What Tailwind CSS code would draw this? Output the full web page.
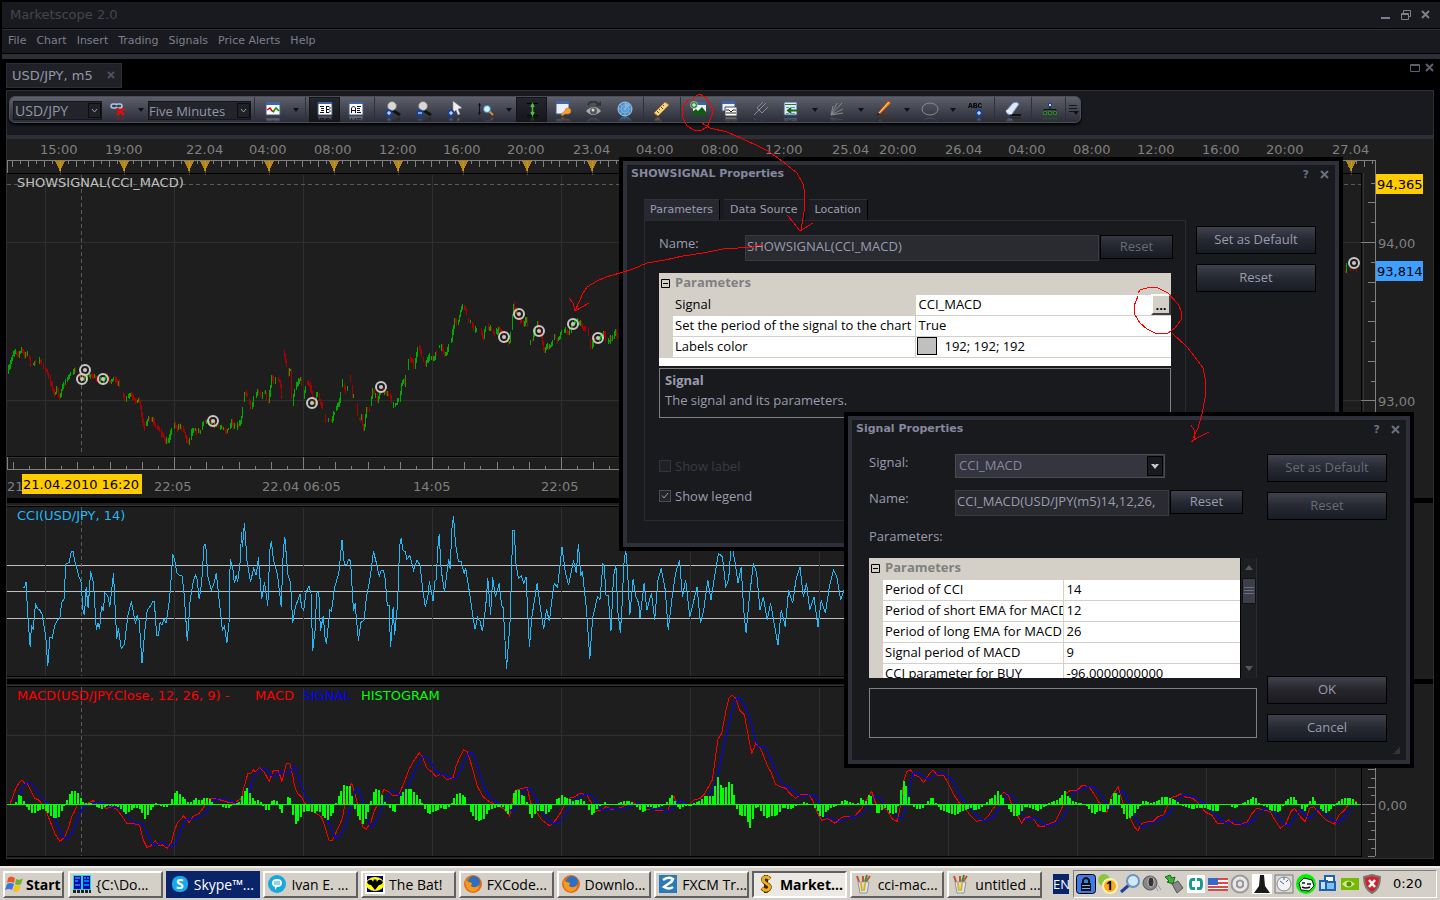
<!DOCTYPE html>
<html lang="en">
<head>
    <meta charset="UTF-8">
    <meta name="viewport" content="width=device-width, initial-scale=1.0">
    <title>Marketscope 2.0</title>
    <script src="https://cdn.jsdelivr.net/npm/@tailwindcss/browser@4"></script>
</head>
<body class="relative flex min-h-screen flex-col overflow-hidden bg-black font-['DejaVu_Sans',sans-serif] text-[13px] text-[#9496a6]">

    <!-- Title bar -->
    <header class="mt-[2px] ml-[2px] flex h-[26px] items-center justify-between bg-[#191a1f] pr-[8px] pl-[8px]">
        <h1 class="text-[13px] text-[#44454f]">Marketscope 2.0</h1>
        <div class="flex gap-[8px] text-[#7d7f8c]">
            <button aria-label="Minimize"><svg width="12" height="12" fill="none" stroke="currentColor" stroke-width="2"><path d="M1 9h9"/></svg></button>
            <button aria-label="Restore"><svg width="12" height="12" fill="none" stroke="currentColor"><path d="M1.500 4.500h7v6h-7zM1 5.500h8M3.500 4V1.500h7v6H9"/></svg></button>
            <button aria-label="Close"><svg width="12" height="12" fill="none" stroke="currentColor" stroke-width="2"><path d="M2 2l7 7M9 2l-7 7"/></svg></button>
        </div>
    </header>

    <nav class="mt-[1px] ml-[2px] flex h-[24px] items-center gap-[10px] border-t border-[#2d2e36] bg-[#191a1f] pl-[6px] text-[11px] text-[#7d7f90]">
        <a href="#">File</a>
        <a href="#">Chart</a>
        <a href="#">Insert</a>
        <a href="#">Trading</a>
        <a href="#">Signals</a>
        <a href="#">Price Alerts</a>
        <a href="#">Help</a>
    </nav>
    <div class="mt-[1px] ml-[2px] h-[5px] bg-[#2d2e36]"></div>

    <!-- Document tabs -->
    <div class="flex h-[31px] items-start justify-between pt-[4px] pr-[5px] pl-[6px]">
        <div class="flex h-[25px] w-[116px] items-center justify-between border border-[#2d2e36] bg-[#202127] pr-[5px] pl-[5px]">
            <span>USD/JPY, m5</span>
            <button aria-label="Close tab" class="text-[#4d5160]"><svg width="9" height="9" fill="none" stroke="currentColor" stroke-width="2"><path d="M1 1l6 6M7 1l-6 6"/></svg></button>
        </div>
        <div class="flex gap-[5px] text-[#5c5f70]">
            <button aria-label="Restore chart"><svg width="10" height="10" fill="none" stroke="currentColor"><path d="M.5 1.500h9v7h-9zM0 2.500h10"/></svg></button>
            <button aria-label="Close chart"><svg width="10" height="10" fill="none" stroke="currentColor" stroke-width="2"><path d="M1 1l7 7M8 1l-7 7"/></svg></button>
        </div>
    </div>

    <main class="mx-[6px] border-x border-t border-[#2d2e36] bg-black">
        <!-- Toolbar -->
        <div class="h-[44px] bg-[#191a1f] pt-[5px] pl-[2px]">
            <div class="flex h-[27px] w-[1072px] items-stretch overflow-hidden rounded-[6px] border border-[#4a4c57] bg-linear-to-b from-[#5d5f6b] via-[#434651] to-[#2b2e38] pl-[3px] shadow-[0_2px_3px_#000] [&_button]:flex [&_button]:w-[31px] [&_button]:shrink-0 [&_button]:justify-center [&_button]:pt-[4px] [&_button>svg]:[-webkit-box-reflect:below_-1px_linear-gradient(transparent_60%,#0007)] [&_i]:w-[15px] [&_i]:shrink-0 [&_i]:pt-[11px] [&_i]:pl-[5px]" id="toolbar">
                <div class="relative mt-[4px] h-[19px] w-[89px] shrink-0">
                    <select aria-label="Instrument" class="h-[19px] w-full appearance-none border border-[#15161a] bg-[#23242b] pl-[1px] font-['Open_Sans',sans-serif] text-[14px] leading-[18px]"><option>USD/JPY</option></select>
                    <svg class="pointer-events-none absolute top-[2px] right-[1px]" width="13" height="15" fill="#202127" stroke="#0c0c10"><path d="M.5.5h12v14H.5z"/><path d="M4 6l2.500 3L9 6" stroke="#9a9cae" fill="none"/></svg>
                </div>
                <button aria-label="Unlink"><svg width="18" height="16" fill="none"><g stroke="#a9c8ee" stroke-width="1.500"><rect x="2" y="3" width="6" height="4" rx="2"/><rect x="7" y="3" width="6" height="4" rx="2"/></g><path d="M5 5h5" stroke="#111" stroke-width="1"/><path d="M8 7l7 7M15 7l-7 7" stroke="#f00" stroke-width="2"/></svg></button>
                <i><svg width="6" height="4"><path d="M0 0h6L3 4z" fill="#111"/></svg></i>
                <div class="relative mt-[4px] h-[19px] w-[103px] shrink-0">
                    <select aria-label="Period" class="h-[19px] w-full appearance-none border border-[#15161a] bg-[#23242b] pl-[0px] font-['Open_Sans',sans-serif] text-[13px] leading-[18px]"><option>Five Minutes</option></select>
                    <svg class="pointer-events-none absolute top-[2px] right-[1px]" width="13" height="15" fill="#202127" stroke="#0c0c10"><path d="M.5.5h12v14H.5z"/><path d="M4 6l2.500 3L9 6" stroke="#9a9cae" fill="none"/></svg>
                </div>
                <div class="w-[6px] shrink-0"><div class="ml-[3px] h-full w-[1px] bg-[#2f3039]"></div></div>
                <button aria-label="Chart type"><svg width="16" height="16"><path d="M1 2h14v12H1z" fill="#fff" stroke="#3c5686"/><path d="M1 1h14v3H1z" fill="#3f64a8"/><path d="M2 9l3-2 2 3 2 1" stroke="#e00" fill="none" stroke-width="1.500"/><path d="M8 11l3-4 3 3" stroke="#090" fill="none" stroke-width="1.500"/></svg></button>
                <i><svg width="6" height="4"><path d="M0 0h6L3 4z" fill="#111"/></svg></i>
                <div class="w-[6px] shrink-0"><div class="ml-[2px] h-full w-[1px] bg-[#2f3039]"></div></div>
                <button aria-label="Bid" class="border border-[#14151a] bg-linear-to-b from-[#25262e] to-[#16171c]"><svg width="16" height="14"><path d="M1 1h14v12H1z" fill="#fff" stroke="#3c5686"/><path d="M1 0h14v2H1z" fill="#3f64a8"/><path d="M3 4.500h4M4 6.500h3M4 8.500h3M3 10.500h4M9.500 4v7M9 4.500h3l1 1v1l-1 1H9M12 7.500l1 1v1l-1 1H9" stroke="#111" fill="none"/></svg></button>
                <button aria-label="Ask"><svg width="16" height="15"><path d="M1 2h14v12H1z" fill="#fff" stroke="#3c5686"/><path d="M1 1h14v2H1z" fill="#3f64a8"/><path d="M3.500 12V7l2-2 2 2v5M3 9.500h4M9 5.500h4M9 7.500h3M9 9.500h3M9 11.500h4" stroke="#111" fill="none"/></svg></button>
                <div class="w-[6px] shrink-0"><div class="ml-[3px] h-full w-[1px] bg-[#2f3039]"></div></div>
                <button aria-label="Zoom in"><svg width="18" height="16"><path d="M8 9l8 5" stroke="#111" stroke-width="3"/><circle cx="8" cy="5" r="4.500" fill="#d8d8d8" stroke="#777"/><circle cx="5" cy="12" r="3.500" fill="#16439a"/><path d="M3 12h4M5 10v4" stroke="#fff"/></svg></button>
                <button aria-label="Zoom out"><svg width="18" height="16"><path d="M8 9l8 5" stroke="#111" stroke-width="3"/><circle cx="8" cy="5" r="4.500" fill="#d8d8d8" stroke="#777"/><circle cx="5" cy="12" r="3.500" fill="#16439a"/><path d="M3 12h4" stroke="#fff"/></svg></button>
                <button aria-label="Cursor"><svg width="18" height="16"><path d="M7 0v12l3-3 2 5 2-1-2-5 4-1z" fill="#eee" stroke="#888" stroke-width=".5"/><circle cx="5" cy="12" r="3.500" fill="#16439a"/><path d="M3 12h4M5 10v4" stroke="#fff"/></svg></button>
                <button aria-label="Scale"><svg width="18" height="16"><path d="M2.500 2v12M1 4h3M1 12h3" stroke="#111" fill="none"/><path d="M12 10l4 4" stroke="#d98b35" stroke-width="2"/><circle cx="10" cy="8" r="3.500" fill="#d4f4fb" stroke="#2e86b8"/></svg></button>
                <i><svg width="6" height="4"><path d="M0 0h6L3 4z" fill="#111"/></svg></i>
                <button aria-label="Auto scale" class="border border-[#14151a] bg-linear-to-b from-[#25262e] to-[#16171c]"><svg width="16" height="15"><path d="M3 1.500h11M3 13.500h11" stroke="#000"/><path d="M8.500 3v9M7 5l1.500-3L10 5M7 10l1.500 3 1.500-3" stroke="#4fc03f" stroke-width="1.500" fill="none"/></svg></button>
                <button aria-label="Chart options"><svg width="18" height="16"><path d="M2 1h13v12H2z" fill="#e9f0fb" stroke="#3c5686"/><path d="M2 0h13v3H2z" fill="#3f64a8"/><path d="M8 15l-1-2 4-3a3 3 0 1 1 3 3l-3 0z" fill="#f5a133" stroke="#b1661a" stroke-width=".5"/></svg></button>
                <button aria-label="Show"><svg width="18" height="16"><path d="M3 4c3-5 8-4 10-1" stroke="#333" stroke-width="2" fill="none"/><path d="M10 5h6V0z" fill="#333"/><path d="M1 10q8-8 15 0q-8 8-15 0" fill="#a9aab2"/><circle cx="8.500" cy="10" r="3.500" fill="#555"/><circle cx="8" cy="9" r="1.500" fill="#ddd"/></svg></button>
                <button aria-label="Radar"><svg width="18" height="16"><circle cx="9" cy="8" r="7" fill="#4c8fc8" stroke="#9fc7e8"/><path d="M2 8h14M9 1v14M4 3l10 10M14 3L4 13" stroke="#9fc7e8" stroke-width=".5"/><circle cx="9" cy="8" r="4" fill="none" stroke="#9fc7e8" stroke-width=".5"/><path d="M9 8V2a6 6 0 0 1 5 3z" fill="#7fb6e0"/></svg></button>
                <div class="w-[6px] shrink-0"><div class="ml-[3px] h-full w-[1px] bg-[#2f3039]"></div></div>
                <button aria-label="Ruler"><svg width="18" height="16"><path d="M1 12L12 1l4 3L5 15z" fill="#f3d58a" stroke="#a97c2a"/><path d="M4 10l2 2M6 8l1 1M8 6l2 2M10 4l1 1" stroke="#7a5210"/></svg></button>
                <div class="w-[6px] shrink-0"><div class="ml-[3px] h-full w-[1px] bg-[#2f3039]"></div></div>
                <button aria-label="Add indicator"><svg width="18" height="16"><path d="M3 3h13v11H3z" fill="#e8f0fb"/><path d="M3 1h13v3H3z" fill="#3f64a8"/><path d="M2 14V11l4-3 2 2 4-4 4 5v3z" fill="#115c11"/><circle cx="4" cy="4" r="3.500" fill="#3d7a34" stroke="#dfe" stroke-width=".5"/><path d="M2 4h4M4 2v4" stroke="#fff"/></svg></button>
                <button aria-label="Indicator list"><svg width="18" height="16"><path d="M1 1h13v9H1z" fill="#eef3fb" stroke="#3c5686"/><path d="M1 0h13v3H1z" fill="#3f64a8"/><path d="M4 6h12v9H4z" fill="#fff" stroke="#444"/><path d="M5 9h3l2 2 2-2h3M5 12h10" stroke="#222" fill="none"/></svg></button>
                <button aria-label="Pitchfork"><svg width="18" height="16" fill="none" stroke="#8a8b90"><path d="M2 14L14 2M5 7l6-6M10 12l6-6M5 7l5 5"/></svg></button>
                <button aria-label="Levels"><svg width="18" height="16"><path d="M1 1h13v13H1z" fill="#dfe9f8" stroke="#3c5686"/><path d="M2 3.500h11" stroke="#2b7a1b"/><path d="M3 6.500h3M8 6.500h4M3 12.500h3M8 12.500h4" stroke="#6c8bc0"/><path d="M5 9.500h11M8 7l-3 2.500L8 12" stroke="#176a10" stroke-width="2" fill="none"/></svg></button>
                <i><svg width="6" height="4"><path d="M0 0h6L3 4z" fill="#111"/></svg></i>
                <button aria-label="Fan"><svg width="18" height="16" fill="none" stroke="#8a8b90"><path d="M2 14L4 5M2 14L13 2M2 14L8 2M2 14l12-6M2 14l12-2"/></svg></button>
                <i><svg width="6" height="4"><path d="M0 0h6L3 4z" fill="#111"/></svg></i>
                <button aria-label="Line"><svg width="18" height="16"><path d="M4 14.500h12" stroke="#5a2c12"/><path d="M3 12L13 0l3 2L5 13z" fill="#f58220" stroke="#a8440b" stroke-width=".7"/><path d="M4 12L14 1" stroke="#ffd08a"/><path d="M1 15l2-3 2 1z" fill="#222"/></svg></button>
                <i><svg width="6" height="4"><path d="M0 0h6L3 4z" fill="#111"/></svg></i>
                <button aria-label="Ellipse"><svg width="18" height="16"><ellipse cx="9" cy="8" rx="8" ry="6" fill="none" stroke="#8a8b90"/></svg></button>
                <i><svg width="6" height="4"><path d="M0 0h6L3 4z" fill="#111"/></svg></i>
                <button aria-label="Text label"><svg width="18" height="16"><text x="1" y="7" font-size="8" font-family="Liberation Mono" font-weight="bold" fill="#000">ABC</text><circle cx="12" cy="12" r="3.500" fill="#16439a"/><path d="M10 12h4M12 10v4" stroke="#fff"/></svg></button>
                <div class="w-[6px] shrink-0"><div class="ml-[3px] h-full w-[1px] bg-[#2f3039]"></div></div>
                <button aria-label="Eraser"><svg width="18" height="16"><path d="M6 14h11" stroke="#111" stroke-width="2"/><path d="M2 10l7-8q4-2 6 1l-7 10q-5 2-6-3z" fill="#dbe7fb" stroke="#7f93b8"/><path d="M2 10q2-1 4 1t2 2" fill="none" stroke="#fff"/></svg></button>
                <div class="w-[6px] shrink-0"><div class="ml-[3px] h-full w-[1px] bg-[#2f3039]"></div></div>
                <button aria-label="Structure"><svg width="18" height="16"><path d="M9 5v4M3 11V8.500h12V11" stroke="#111" fill="none"/><path d="M7.500 2.500h3v3h-3z" fill="#bcd6ff" stroke="#1d3d7a"/><path d="M2.500 10.500h3v3h-3zM7.500 10.500h3v3h-3zM12.500 10.500h3v3h-3z" fill="#123d12" stroke="#2f8a20"/></svg></button>
                <svg class="border-l border-[#2f3039]" width="15" height="25"><path d="M3 8.500h8M3 11.500h8M3 14.500h5" stroke="#15161a"/><path d="M7 14h6l-3 4z" fill="#111"/></svg>
            </div>
        </div>
        <div class="h-[4px] bg-[#2d2e36]"></div>

        <!-- Price panel -->
        <svg class="block h-[359px] w-full bg-[#1e1e1e]" shape-rendering="crispEdges">
            <defs>
                <g id="mark" shape-rendering="auto"><circle r="5" fill="none" stroke="#c8c8c8" stroke-width="2"/><circle r="2" fill="#c8c8c8"/></g>
            </defs>
            <g transform="translate(-7 -139)">
                <g class="grid-x" data-y1="175" data-y2="456"></g>
                <path d="M7 242.500h1354M7 400.500h1354" stroke="#2f2f2f"/>
                <path d="M81.500 175V455M7 184.500h1354" stroke="#5a5a5a" stroke-dasharray="4 3"/>
                <g id="topRuler"></g>
                <path d="M7 173.500h1354.500V456.500H7" stroke="#000" fill="none"/>
                <path d="M7 457.500h1356V173" stroke="#333" fill="none"/>
                <g id="priceBars"></g>
                <g id="marks"></g>
                <g id="bottomRuler"></g>
                <g id="priceAxis"></g>
                <text x="17" y="187" fill="#c0c0c0">SHOWSIGNAL(CCI_MACD)</text>
                <g fill="#808080" id="timeLabels"></g>
                <g fill="#808080">
                    <text x="7" y="491">21</text>
                    <text x="154" y="491">22:05</text>
                    <text x="262" y="491">22.04 06:05</text>
                    <text x="413" y="491">14:05</text>
                    <text x="541" y="491">22:05</text>
                    <text x="1378" y="248">94,00</text>
                    <text x="1378" y="406">93,00</text>
                </g>
                <path d="M22 474h120v20H22z" fill="#fc0"/>
                <text x="23" y="489" fill="#000">21.04.2010 16:20</text>
                <path d="M1376 174h47v20h-47z" fill="#fc0"/>
                <text x="1377" y="189" fill="#000">94,365</text>
                <path d="M1376 261h47v20h-47z" fill="#3f9fff"/>
                <text x="1377" y="276" fill="#000">93,814</text>
            </g>
        </svg>

        <!-- CCI panel -->
        <svg class="mt-[5px] block h-[176px] w-full bg-[#1e1e1e]" shape-rendering="crispEdges">
            <g transform="translate(-7 -503)">
                <path d="M7 505.500h1354" stroke="#333"/>
                <path d="M7 506.500h1354.500V676.500H7" stroke="#000" fill="none"/>
                <path d="M7 677.500h1356" stroke="#333"/>
                <path d="M7 565.500h1354M7 591.500h1354M7 618.500h1354" stroke="#c0c0c0"/>
                <g class="grid-x" data-y1="508" data-y2="676"></g>
                <path d="M81.500 507V676" stroke="#5a5a5a" stroke-dasharray="4 3"/>
                <polyline id="cci" fill="none" stroke="#22b8f5"/>
                <text x="17" y="520" fill="#22b8f5">CCI(USD/JPY, 14)</text>
            </g>
        </svg>

        <!-- MACD panel -->
        <svg class="mt-[5px] block h-[175px] w-full border-b border-[#333] bg-[#1e1e1e]" shape-rendering="crispEdges">
            <g transform="translate(-7 -684)">
                <path d="M7 685.500h1354" stroke="#333"/>
                <path d="M7 686.500h1354.500V856.500H7" stroke="#000" fill="none"/>
                <path d="M7 735.500h1354" stroke="#2f2f2f"/>
                <g class="grid-x" data-y1="688" data-y2="856"></g>
                <path d="M81.500 687V856" stroke="#5a5a5a" stroke-dasharray="4 3"/>
                <g id="macdAxis"></g>
                <polyline id="macd" fill="none" stroke="#f00"/>
                <polyline id="macdSignal" fill="none" stroke="#00f"/>
                <path id="histogram" fill="none" stroke="#0f0" stroke-width="2"/>
                <path d="M7 804.500h1354" stroke="#0f0"/>
                <text x="17" y="700" fill="#f00">MACD(USD/JPY.Close, 12, 26, 9) -</text>
                <text x="255" y="700" fill="#f00">MACD</text>
                <text x="303" y="700" fill="#00f">SIGNAL</text>
                <text x="361" y="700" fill="#0f0">HISTOGRAM</text>
                <text x="1378" y="810" fill="#808080">0,00</text>
            </g>
        </svg>
    </main>

    <!-- SHOWSIGNAL Properties -->
    <section class="absolute top-[157px] left-[619px] h-[394px] w-[724px] border-4 border-black font-['Open_Sans',sans-serif] text-[13px] text-[#9a9cae]">
        <div class="h-full border-4 border-[#2d3038] bg-[#191a1e]">
            <div class="flex h-[34px] items-start justify-between pr-[6px] pl-[4px] font-['DejaVu_Sans',sans-serif] text-[11px] leading-[17px] font-bold text-[#85889e]">
                <h2>SHOWSIGNAL Properties</h2>
                <div class="flex items-center gap-[11px] pt-[1px] text-[#6c6f80]">
                    <button aria-label="Help">?</button>
                    <button aria-label="Close"><svg width="9" height="9" fill="none" stroke="currentColor" stroke-width="2"><path d="M1 1l7 7M8 1l-7 7"/></svg></button>
                </div>
            </div>
            <div class="flex items-start gap-[10px] pl-[17px]">
                <div class="w-[542px]">
                    <div class="flex gap-[4px] font-['DejaVu_Sans',sans-serif] text-[11px] [&>button]:h-[21px] [&>button]:border-t [&>button]:border-r [&>button]:border-t-[#2f3038] [&>button]:border-r-black [&>button]:px-[6px]">
                        <button class="bg-[#282930]">Parameters</button>
                        <button class="bg-[#1d1e23]">Data Source</button>
                        <button class="bg-[#1d1e23]">Location</button>
                    </div>
                    <div class="h-[301px] border border-[#2a2b31] pt-[14px] pr-[12px] pl-[14px]">
                        <div class="flex items-start">
                            <label for="showName" class="w-[86px] leading-[16px]">Name:</label>
                            <input id="showName" value="SHOWSIGNAL(CCI_MACD)" class="h-[26px] w-[354px] border border-[#3a3b42] bg-[#2a2a31] px-[1px] pb-[5px] text-[13px]">
                            <button class="ml-[1px] h-[24px] w-[73px] border border-black bg-linear-to-b from-[#34373f] via-[#23262e] to-[#181b23] text-[#676a78]">Reset</button>
                        </div>
                        <div class="relative mt-[12px] h-[93px] w-[512px] bg-white text-black">
                            <table class="w-full table-fixed border-collapse text-left [&_td]:h-[21px] [&_td]:overflow-hidden [&_td]:border-b [&_td]:border-[#d4d0c8] [&_td]:p-0 [&_td]:pb-[2px] [&_td]:leading-[18px] [&_td]:whitespace-nowrap">
                                <colgroup><col class="w-[14px]"><col class="w-[242px]"><col></colgroup>
                                <tr class="bg-[#d4d0c8]"><td><svg class="mt-[2px] ml-[2px]" width="9" height="9" fill="none" stroke="#000"><path d="M.5.5h8v8h-8zM2 4.500h5"/></svg></td><td colspan="2" class="pl-[2px]! font-bold text-[#808080]">Parameters</td></tr>
                                <tr><td class="bg-[#d4d0c8]"></td><td class="bg-[#d4d0c8] pl-[2px]!">Signal</td><td class="border-l pl-[3px]!">CCI_MACD</td></tr>
                                <tr><td class="bg-[#d4d0c8]"></td><td class="pl-[2px]!">Set the period of the signal to the chart</td><td class="border-l pl-[3px]!">True</td></tr>
                                <tr><td class="bg-[#d4d0c8]"></td><td class="pl-[2px]!">Labels color</td><td class="border-l pl-[1px]!"><div class="flex items-center gap-[8px]"><span class="h-[18px] w-[20px] border border-black bg-[#c0c0c0]"></span>192; 192; 192</div></td></tr>
                            </table>
                            <button aria-label="Edit signal" class="absolute top-[21px] right-0 h-[21px] w-[20px] border-2 border-t-white border-r-[#404040] border-b-[#404040] border-l-white bg-[#d4d0c8] leading-[12px] font-bold">...</button>
                        </div>
                        <div class="mt-[2px] h-[50px] w-[512px] border border-[#808080] px-[5px] pt-[1px] leading-[20px]">
                            <p class="font-bold">Signal</p>
                            <p>The signal and its parameters.</p>
                        </div>
                        <label class="mt-[38px] flex items-center gap-[4px] leading-[20px] text-[#3a3b44]">
                            <input type="checkbox" disabled class="size-[12px] appearance-none border border-[#33343b] bg-[#202127]">Show label
                        </label>
                        <label class="relative mt-[10px] flex items-center gap-[4px] leading-[20px]">
                            <input type="checkbox" checked class="size-[12px] appearance-none border border-[#4a4b55] bg-[#24252c]">Show legend
                            <svg class="pointer-events-none absolute top-[4px] left-0" width="12" height="12" fill="none" stroke="#9a9cae"><path d="M3 5.500l2 2.500 4-5"/></svg>
                        </label>
                    </div>
                </div>
                <div class="flex flex-col gap-[10px] pt-[27px] [&>button]:h-[28px] [&>button]:w-[120px] [&>button]:border [&>button]:border-black [&>button]:bg-linear-to-b [&>button]:from-[#3f424c] [&>button]:via-[#262932] [&>button]:to-[#181c25]">
                    <button>Set as Default</button>
                    <button>Reset</button>
                </div>
            </div>
        </div>
    </section>

    <!-- Signal Properties -->
    <section class="absolute top-[412px] left-[844px] h-[356px] w-[570px] border-4 border-black font-['Open_Sans',sans-serif] text-[13px] text-[#9a9cae]">
        <div class="relative h-full border-4 border-[#2d3038] bg-[#191a1e]">
            <div class="flex h-[34px] items-start justify-between pr-[6px] pl-[4px] font-['DejaVu_Sans',sans-serif] text-[11px] leading-[17px] font-bold text-[#85889e]">
                <h2>Signal Properties</h2>
                <div class="flex items-center gap-[11px] pt-[1px] text-[#6c6f80]">
                    <button aria-label="Help">?</button>
                    <button aria-label="Close"><svg width="9" height="9" fill="none" stroke="currentColor" stroke-width="2"><path d="M1 1l7 7M8 1l-7 7"/></svg></button>
                </div>
            </div>
            <div class="flex items-start gap-[10px] pl-[17px]">
                <div class="w-[388px]">
                    <div class="flex h-[36px] items-start">
                        <label for="signalKind" class="w-[86px] leading-[16px]">Signal:</label>
                        <div class="relative w-[210px]">
                            <select id="signalKind" class="h-[24px] w-full appearance-none border border-[#4a4b52] bg-[#35353f] pl-[3px] text-[13px] text-[#85889e]"><option>CCI_MACD</option></select>
                            <svg class="pointer-events-none absolute top-[2px] right-[2px]" width="16" height="20"><path d="M.5.5h15v19H.5z" fill="#191a1e" stroke="#000"/><path d="M4 8h3l1 1 1-1h3l-4 5z" fill="#c8cad6"/></svg>
                        </div>
                    </div>
                    <div class="flex h-[36px] items-start">
                        <label for="signalName" class="w-[86px] leading-[16px]">Name:</label>
                        <input id="signalName" value="CCI_MACD(USD/JPY(m5)14,12,26," class="h-[26px] w-[214px] border border-[#3a3b42] bg-[#2a2a31] px-[1px] pb-[5px] text-[13px]">
                        <button class="ml-[1px] h-[24px] w-[73px] border border-black bg-linear-to-b from-[#3f424c] via-[#262932] to-[#181c25]">Reset</button>
                    </div>
                    <p class="h-[32px] leading-[20px]">Parameters:</p>
                    <div class="flex h-[120px] overflow-hidden">
                        <div class="w-[371px] overflow-hidden bg-white text-black">
                            <table class="w-full table-fixed border-collapse text-left [&_td]:h-[21px] [&_td]:overflow-hidden [&_td]:border-b [&_td]:border-[#d4d0c8] [&_td]:p-0 [&_td]:pb-[2px] [&_td]:leading-[18px] [&_td]:whitespace-nowrap">
                                <colgroup><col class="w-[14px]"><col class="w-[180px]"><col></colgroup>
                                <tr class="bg-[#d4d0c8]"><td><svg class="mt-[2px] ml-[2px]" width="9" height="9" fill="none" stroke="#000"><path d="M.5.5h8v8h-8zM2 4.500h5"/></svg></td><td colspan="2" class="pl-[2px]! font-bold text-[#808080]">Parameters</td></tr>
                                <tr><td class="bg-[#d4d0c8]"></td><td class="pl-[2px]!">Period of CCI</td><td class="border-l pl-[3px]!">14</td></tr>
                                <tr><td class="bg-[#d4d0c8]"></td><td class="pl-[2px]!">Period of short EMA for MACD</td><td class="border-l pl-[3px]!">12</td></tr>
                                <tr><td class="bg-[#d4d0c8]"></td><td class="pl-[2px]!">Period of long EMA for MACD</td><td class="border-l pl-[3px]!">26</td></tr>
                                <tr><td class="bg-[#d4d0c8]"></td><td class="pl-[2px]!">Signal period of MACD</td><td class="border-l pl-[3px]!">9</td></tr>
                                <tr><td class="bg-[#d4d0c8]"></td><td class="pl-[2px]!">CCI parameter for BUY</td><td class="border-l pl-[3px]!">-96,0000000000</td></tr>
                            </table>
                        </div>
                        <div class="flex w-[17px] flex-col items-center justify-between border-x border-x-black border-r-[#2a2b31] bg-[#1d1e22] py-[7px]">
                            <svg width="8" height="5"><path d="M0 5h8L4 0z" fill="#55575f"/></svg>
                            <svg class="mt-[8px] mb-auto" width="14" height="26"><path d="M.5.5h13v25H.5z" fill="#3c3e49" stroke="#111"/><path d="M2 9.500h10M2 12.500h10M2 15.500h10" stroke="#6c6f80"/></svg>
                            <svg width="8" height="5"><path d="M0 0h8L4 5z" fill="#55575f"/></svg>
                        </div>
                    </div>
                    <div class="mt-[10px] h-[50px] border border-[#808080]"></div>
                </div>
                <div class="flex h-[288px] flex-col gap-[10px] [&>button]:h-[28px] [&>button]:w-[120px] [&>button]:border [&>button]:border-black [&>button]:bg-linear-to-b [&>button]:from-[#3f424c] [&>button]:via-[#262932] [&>button]:to-[#181c25]">
                    <button disabled class="text-[#676a78]">Set as Default</button>
                    <button disabled class="text-[#676a78]">Reset</button>
                    <button class="mt-auto via-[#26252c]! to-[#1c1b20]!">OK</button>
                    <button>Cancel</button>
                </div>
            </div>
            <svg class="absolute right-[5px] bottom-[5px]" width="8" height="8"><path d="M6 0h1v7H0V6h2V4h2V2h2z" fill="#34353b"/></svg>
        </div>
    </section>

    <!-- Hand-drawn pointers -->
    <svg class="pointer-events-none absolute top-0 left-0 h-[500px] w-full" fill="none" stroke="#f00" shape-rendering="crispEdges">
        <path d="M692 100L696 96L700 94L706 98L711 105L713 112L710 120L707 127L700 131L694 130L687 126L683 118L682 110L685 103L690 99"/>
        <path d="M702 123L710 128L727 132L743 139L760 147L768 151L782 161L797 173L803 184L805 194L804 212L801 230M787 215L794 223L800 231L813 223"/>
        <path d="M763 244L753 247L723 249L703 253L683 256L665 260L647 263L633 269L620 273L606 277L597 281L587 287L583 293L579 302L575 311M569 298L573 303L575 311L589 303"/>
        <path d="M1138 293L1140 290L1150 287L1158 288L1168 293L1178 304L1182 313L1181 320L1175 328L1168 333L1155 333L1147 329L1140 323L1135 315L1134 306L1138 296"/>
        <path d="M1172 333L1187 347L1195 357L1203 368L1206 383L1205 398L1202 414L1198 428L1193 438M1191 425L1194 430L1195 438L1191 442L1197 438L1209 432"/>
    </svg>

    <!-- Taskbar -->
    <footer class="mt-auto flex h-[34px] items-center border-t-2 border-[#efece6] bg-[#d4d0c8] pr-[3px] pl-[3px] font-['Open_Sans',sans-serif] text-[14px] text-black [&_button]:flex [&_button]:h-[27px] [&_button]:items-center [&_button]:gap-[4px] [&_button]:overflow-hidden [&_button]:border-2 [&_button]:border-t-white [&_button]:border-r-[#606060] [&_button]:border-b-[#606060] [&_button]:border-l-white [&_button]:whitespace-nowrap">
        <button class="mr-[4px] w-[61px] shrink-0 gap-[1px]! font-bold">
            <svg class="shrink-0" width="20" height="20"><path d="M3 4q3-3 7 0L9 9Q5 7 2 9z" fill="#e8562a"/><path d="M11 5q4 2 7-1l-2 6q-3 2-6 0z" fill="#6fb52c"/><path d="M2 10q3-2 7 0l-2 6q-3-2-7 0z" fill="#3d74dc"/><path d="M10 11q3 2 6 0l-2 6q-3 2-6 0z" fill="#f6c21c"/></svg>Start
        </button>
        <div class="flex flex-1 gap-[3px] [&_svg]:shrink-0 [&>button]:w-0 [&>button]:flex-1 [&>button]:pl-[2px]">
            <button><svg width="20" height="20"><path d="M1 1h18v15H1z" fill="#00e0e0"/><path d="M2 2h7v13H2zM11 2h7v13h-7z" fill="#0000b0"/><path d="M3 4h5M3 7h3M12 4h2M15 4h2M12 7h5M3 11h5M12 11h5" stroke="#0ff"/><path d="M1 17.500h18" stroke="#222" stroke-width="3" stroke-dasharray="3 1"/></svg>{C:\Do...</button>
            <button class="border-[#0a246a]! bg-[#0a246a] text-white"><svg width="20" height="20"><rect x="2" y="2" width="16" height="16" rx="7" fill="#18a8ee"/><text x="6" y="15" font-size="14" font-weight="bold" fill="#fff">S</text></svg>Skype™...</button>
            <button><svg width="20" height="20"><circle cx="10" cy="10" r="9" fill="#18a8e0"/><path d="M5 9q0-4 5-4t5 4-5 4l-2 3v-3q-3-1-3-4z" fill="#fff"/><path d="M7 8h6M7 10h6" stroke="#18a8e0"/></svg>Ivan E. ...</button>
            <button><svg width="20" height="20"><path d="M0 0h20v20H0z" fill="#fff"/><path d="M2 2h16v16H2z" fill="#00007a"/><ellipse cx="10" cy="10" rx="9" ry="7" fill="#ff0"/><path d="M2 8q2-3 5-2l1 2 1-3 1 1 1-1 1 3 1-2q3-1 5 2-1 3-4 3l-4 5-4-5q-3 0-4-3z" fill="#000"/></svg>The Bat!</button>
            <button><svg width="20" height="20"><circle cx="10" cy="10" r="9" fill="#e66a12"/><circle cx="11" cy="8" r="6" fill="#2d6fc0"/><path d="M2 5q1 3 4 3l3 1-1 3q4 3 8-1 0 6-7 7-7-2-7-13z" fill="#f59a1c"/></svg>FXCode...</button>
            <button><svg width="20" height="20"><circle cx="10" cy="10" r="9" fill="#e66a12"/><circle cx="11" cy="8" r="6" fill="#2d6fc0"/><path d="M2 5q1 3 4 3l3 1-1 3q4 3 8-1 0 6-7 7-7-2-7-13z" fill="#f59a1c"/></svg>Downlo...</button>
            <button><svg width="20" height="20"><rect x="1" y="1" width="18" height="18" fill="#2a7ab8"/><path d="M5 6q5-4 10-1-1 3-5 5l-4 3q5 3 9 0" stroke="#fff" stroke-width="2.500" fill="none"/></svg>FXCM Tr...</button>
            <button class="border-t-[#606060]! border-r-white! border-b-white! border-l-[#606060]! bg-[#ece9e4] font-bold"><svg width="20" height="20"><path d="M14 5q-4-4-7 0 0 3 4 5t2 5q-3 3-7-1M10 1v18" stroke="#3a2a00" stroke-width="4" fill="none"/><path d="M14 5q-4-4-7 0 0 3 4 5t2 5q-3 3-7-1" stroke="#f4ad18" stroke-width="3" fill="none"/></svg>Market...</button>
            <button><svg width="20" height="20"><path d="M5 8l-2-6M9 8V2M12 8l4-6" stroke="#c4542a" stroke-width="2"/><path d="M11 8l2-7" stroke="#3c8a2c" stroke-width="2"/><path d="M4 8h11l-2 11H6z" fill="#dce6ee" stroke="#8a97a3"/><path d="M7 9l1 8M11 9l-1 8" stroke="#e0b020" stroke-width="2"/></svg>cci-mac...</button>
            <button><svg width="20" height="20"><path d="M5 8l-2-6M9 8V2M12 8l4-6" stroke="#c4542a" stroke-width="2"/><path d="M11 8l2-7" stroke="#3c8a2c" stroke-width="2"/><path d="M4 8h11l-2 11H6z" fill="#dce6ee" stroke="#8a97a3"/><path d="M7 9l1 8M11 9l-1 8" stroke="#e0b020" stroke-width="2"/></svg>untitled ...</button>
        </div>
        <span class="mr-[4px] ml-[11px] h-[20px] w-[16px] overflow-hidden bg-[#0a246a] text-[13px] leading-[20px] text-white">EN</span>
        <div class="flex h-[28px] w-[364px] items-center gap-[2px] border border-t-[#808080] border-r-white border-b-white border-l-[#808080] pl-[2px]">
            <svg width="20" height="20"><rect x=".5" y=".5" width="19" height="19" rx="3" fill="#3d7bea" stroke="#000"/><path d="M5 9h10v8H5z" fill="#111"/><path d="M7 9V6q3-4 6 0v3" stroke="#111" stroke-width="2" fill="none"/><path d="M6 11.500h8M6 14.500h8" stroke="#7ab0ff"/></svg>
            <svg width="20" height="20"><circle cx="6" cy="6" r="6" fill="#8cc63c"/><circle cx="12" cy="12" r="7" fill="#f9a91a" stroke="#fff2b0" stroke-width="2"/><text x="8" y="16" font-size="12" font-weight="bold" fill="#000">1</text></svg>
            <svg width="20" height="20"><path d="M9 11l-8 7" stroke="#23409a" stroke-width="3"/><circle cx="13" cy="7" r="6" fill="#cfe9fb" stroke="#6e93bd" stroke-width="2"/></svg>
            <svg width="20" height="20"><circle cx="8" cy="9" r="7" fill="#888" stroke="#555"/><ellipse cx="9" cy="8" rx="3" ry="5" fill="#333" stroke="#bbb"/><path d="M14 13l2 4M16 11l3 5" stroke="#99a" fill="none"/></svg>
            <svg width="20" height="20"><path d="M8 10l6-3 5 7-6 5z" fill="#888" stroke="#555"/><path d="M1 3l5-2 2 3 3-1-2 7-6-2 2-1z" fill="#3fae3a" stroke="#1d6a1a"/></svg>
            <svg width="20" height="20"><path d="M1 1h18v18H1z" fill="#fff"/><path d="M9 4H6q-3 0-3 6t3 6h3v-3H6V7h3zM11 4h3q3 0 3 6t-3 6h-3v-3h3V7h-3z" fill="#159b8c"/></svg>
            <svg width="20" height="20"><path d="M0 4h20v13H0z" fill="#fff"/><path d="M0 5h20M0 9h20M0 13h20M0 16h20" stroke="#e04848" stroke-width="2"/><path d="M0 4h10v7H0z" fill="#3568c8"/></svg>
            <svg width="20" height="20"><circle cx="10" cy="10" r="8.500" fill="#e8e8e8" stroke="#999" stroke-width="2"/><path d="M7 13V8q3-3 6 0M13 7v5q-3 3-6 0" stroke="#999" stroke-width="2" fill="none"/></svg>
            <svg width="20" height="20"><path d="M0 0h20v20H0z" fill="#fff"/><path d="M8 1h4l1 11 5 7H2l5-7z" fill="#1a1a1a"/></svg>
            <svg width="20" height="20"><path d="M1 1h18v18H1z" fill="#d8d8d8" stroke="#777"/><circle cx="10" cy="10" r="7" fill="#f2f2f2" stroke="#888"/><path d="M10 10l-4-3M10 3v3M14 6l-2 2" stroke="#3a6aa8"/></svg>
            <svg width="20" height="20"><circle cx="10" cy="10" r="10" fill="#00f000"/><path d="M3 9l5-5 8 2 2 6-5 5-8-1z" fill="#f4f4f4" stroke="#111"/><path d="M6 9h3M11 10h4M6 13q4 2 8 0" stroke="#111" stroke-width="1.500" fill="none"/></svg>
            <svg width="20" height="20" stroke="#1e62b4" stroke-width="2"><path d="M7 2h9v9H7z" fill="#fff"/><path d="M2 7h7v9H2z" fill="#bfe0fa"/><path d="M8 8h9v8H8z" fill="#7fc0f0"/></svg>
            <svg width="20" height="20"><path d="M1 4h18v12H1z" fill="#76b900"/><path d="M2 10q6-7 13 0-7 7-13 0z" fill="#cfe8a0"/><circle cx="9" cy="10" r="2.500" fill="#5a8f00"/></svg>
            <svg width="20" height="20"><path d="M10 1l8 2q0 12-8 16Q2 15 2 3z" fill="#d42027" stroke="#777" stroke-width="2"/><path d="M7 6l6 7M13 6l-6 7" stroke="#fff" stroke-width="2.500"/></svg>
            <time class="ml-[9px] font-['DejaVu_Sans',sans-serif] text-[13px]">0:20</time>
        </div>
    </footer>

    <script>
        const byId = (id) => document.getElementById(id);
        const parse = (s) => s.trim().split(/\s+/).map(p => p.split(",").map(Number));
        // digitised points -> page units
        const place = (s, x0, y0, kx, ky = 3) => parse(s).map(([x, y]) => [x0 + x / kx, y0 + y / ky]);
        const toPoints = (list) => list.map(([x, y]) => `${x.toFixed(1)},${y.toFixed(1)}`).join(" ");

        function valueAt(list, x) {
            let i = 1;
            while (i < list.length - 1 && list[i][0] < x) i++;
            const [x1, y1] = list[i - 1], [x2, y2] = list[i];
            return y1 + (y2 - y1) * Math.min(1, Math.max(0, (x - x1) / (x2 - x1)));
        }

        let seed = 7;
        function rnd() {
            seed = (seed * 16807) % 2147483647;
            return seed / 2147483647;
        }

        // grid
        document.querySelectorAll(".grid-x").forEach(g => {
            let d = "";
            for (let i = 0; i < 11; i++) d += `M${45.5 + i * 129} ${g.dataset.y1}V${g.dataset.y2}`;
            g.innerHTML = `<path d="${d}" stroke="#2f2f2f"/>`;
        });

        // rulers
        let topTicks = "M7.500 173V160.500H1375.500";
        for (let x = 12.5, i = 0; x < 1375; x += 8.05, i++) topTicks += `M${x.toFixed(1)} 161v${i % 2 ? 3 : 6}`;
        const flags = [60, 124, 189, 205, 269, 334, 398, 463, 527, 592, 1351];
        byId("topRuler").innerHTML = `<path d="${topTicks}" stroke="#808080" fill="none"/>` +
            flags.map(x => `<path d="M${x - 5} 161h10l-3 6l-2 5l-2 -5z" fill="#b8860b"/><path d="M${x + 0.5} 161v14" stroke="#c9a34a" stroke-opacity=".5"/>`).join("");

        let bottomTicks = "M7.500 457V469.500H1361";
        for (let i = -2; i < 80; i++) {
            const x = (45.5 + i * 16.125).toFixed(1);
            bottomTicks += `M${x} 469v-${i % 8 === 0 ? 12 : i % 2 ? 3 : 7}`;
        }
        byId("bottomRuler").innerHTML = `<path d="${bottomTicks}" stroke="#808080" fill="none"/>`;

        let priceTicks = "M1375.500 160V469";
        for (let i = -3; i < 12; i++) priceTicks += `M1375 ${(242.5 + i * 19.8).toFixed(1)}h-${i % 8 === 0 ? 14 : i % 2 ? 4 : 7}`;
        byId("priceAxis").innerHTML = `<path d="${priceTicks}" stroke="#808080"/>`;
        let macdTicks = "M1375.500 687V856";
        for (let i = -13; i < 7; i++) macdTicks += `M1375 ${(804.5 + i * 8.7).toFixed(1)}h-${i === 0 ? 13 : i % 2 ? 4 : 7}`;
        byId("macdAxis").innerHTML = `<path d="${macdTicks}" stroke="#808080"/>`;

        const times = [[40, "15:00"], [105, "19:00"], [186, "22.04"], [249, "04:00"], [314, "08:00"], [379, "12:00"], [443, "16:00"], [507, "20:00"], [573, "23.04"], [636, "04:00"], [701, "08:00"], [765, "12:00"], [832, "25.04"], [879, "20:00"], [945, "26.04"], [1008, "04:00"], [1073, "08:00"], [1137, "12:00"], [1202, "16:00"], [1266, "20:00"], [1332, "27.04"]];
        byId("timeLabels").innerHTML = times.map(([x, t]) => `<text x="${x}" y="154">${t}</text>`).join("");

        const marks = [[85, 370], [82, 379], [103, 379], [213, 421], [312, 403], [381, 387], [504, 337], [519, 314], [539, 331], [573, 324], [598, 338], [1354, 263]];
        byId("marks").innerHTML = marks.map(([x, y]) => `<use href="#mark" x="${x}" y="${y}"/>`).join("");

        // price
        const price = place(`18,275 28,225 36,210 44,225 50,205 58,222 66,215 74,250 82,248 90,240 98,245 106,260 114,270 124,310 132,340 138,325 146,350 152,320 160,300 166,290 174,275 182,268 190,275 200,290 210,290 220,280 230,290 240,295 250,298 260,290 270,302 280,292 290,310 296,325 306,358 314,345 320,340 330,362 340,362 348,420 354,440 360,415 374,415 380,440 390,450 400,475 408,484 416,460 424,435 434,440 446,440 456,482 462,485 470,450 478,445 488,460 496,430 504,420 516,430 530,432 540,445 556,452 566,425 574,440 584,435 592,400 598,330 604,345 614,385 620,355 630,330 640,350 648,335 656,368 664,295 676,300 684,300 690,360 693,205 700,245 705,285 710,255 714,380 720,330 728,310 735,290 742,350 750,305 758,310 764,350 770,370 776,330 782,365 790,375 798,432 806,415 812,420 820,390 828,375 838,302 846,335 856,285 862,345 870,355 878,420 884,410 890,455 896,390 904,390 912,330 924,355 934,325 944,340 954,345 960,375 968,370 978,355 984,300 990,310 1000,240 1006,235 1014,262 1022,200 1030,215 1040,250 1050,225 1058,235 1068,220 1076,195 1090,225 1100,190 1106,170 1112,120 1120,130 1130,82 1140,82 1144,115 1154,130 1160,150 1172,140 1182,172 1190,135 1200,145 1210,160 1222,140 1234,170 1246,190 1252,145 1256,72 1264,95 1272,115 1282,130 1290,115 1295,190 1306,170 1314,125 1324,165 1332,215 1340,190 1346,205 1356,165 1366,180 1378,145 1390,160 1400,135 1414,122 1428,140 1440,150 1446,205 1454,175 1466,175 1478,155 1486,190 1494,175 1508,155 1516,190`, 0, 280, 2.45);
        let up = "M1346.500 263v10", down = "M1345.500 270v3M1350.500 268v3M1353.500 269v2M1356.500 269v3";
        let last = price[0][1];
        for (let x = 8; x < 619; x += 1) {
            const y = valueAt(price, x) + (rnd() - 0.5) * 3;
            const bar = `M${x + 0.5} ${(Math.min(y, last) - rnd() * 3).toFixed(1)}V${(Math.max(y, last) + 1 + rnd() * 3).toFixed(1)}`;
            if (rnd() < 0.8) {
                if (y <= last) up += bar; else down += bar;
            }
            last = y;
        }
        byId("priceBars").innerHTML = `<path d="${down}" stroke="#a80000"/><path d="${up}" stroke="#00a800"/>`;

        // CCI
        const cci = place(`56,262 60,262 64,247 68,350 74,440 77,378 81,388 87,313 92,326 97,329 103,343 108,380 112,408 117,497 122,413 128,414 134,376 140,362 147,352 151,307 157,297 161,193 169,188 175,154 179,154 183,184 188,203 193,229 199,247 203,330 207,346 211,262 216,325 222,213 229,249 236,389 240,370 244,386 249,317 253,334 257,280 264,287 269,320 278,220 286,418 290,385 297,446 305,432 313,348 322,304 332,372 336,346 341,362 348,490 355,390 361,330 370,316 375,304 378,304 384,407 388,407 392,368 397,374 402,357 407,368 414,310 418,260 423,162 428,180 433,218 440,226 446,228 451,280 459,422 466,300 474,240 479,226 483,238 488,298 494,250 500,133 504,133 509,228 518,270 524,250 530,220 536,290 545,391 550,378 556,428 561,370 564,178 570,200 574,250 579,226 582,247 588,190 592,96 594,140 599,69 605,180 614,247 621,205 628,226 633,172 641,298 648,247 656,317 661,150 665,124 670,180 680,226 689,320 694,150 698,112 705,222 712,250 717,368 724,320 735,283 739,322 744,330 750,277 757,259 762,280 766,452 772,390 776,280 781,276 785,392 792,348 796,410 800,431 808,330 812,334 820,262 830,220 838,121 844,196 850,193 855,176 859,185 866,334 870,310 878,422 884,368 892,360 898,290 906,240 915,154 922,188 929,229 934,211 940,213 944,240 949,318 953,316 957,442 963,322 967,404 974,310 979,140 983,114 987,150 993,155 997,178 1004,166 1013,211 1022,181 1029,196 1035,260 1042,322 1048,290 1052,244 1061,304 1065,244 1069,240 1072,150 1076,103 1081,210 1089,277 1095,220 1099,176 1103,208 1107,90 1111,48 1116,130 1123,184 1130,184 1137,220 1141,205 1148,260 1160,360 1164,388 1170,352 1176,364 1182,394 1190,320 1195,235 1202,344 1207,232 1214,292 1223,250 1229,316 1233,324 1241,506 1250,360 1256,92 1260,92 1264,190 1270,235 1277,228 1283,250 1289,232 1297,442 1303,352 1316,250 1326,340 1332,388 1339,328 1346,364 1351,310 1358,250 1366,262 1377,142 1385,215 1393,256 1405,181 1412,220 1417,132 1423,228 1427,214 1437,330 1445,476 1452,352 1464,290 1470,298 1477,193 1481,200 1484,285 1490,287 1497,392 1503,230 1509,196 1514,340 1520,398 1525,300 1528,196 1533,150 1537,200 1543,344 1551,238 1558,290 1565,310 1568,355 1578,250 1585,330 1596,280 1604,360 1612,240 1620,205 1630,270 1637,390 1646,300 1655,220 1665,180 1672,290 1680,240 1690,350 1698,310 1708,260 1716,370 1724,330 1734,240 1742,300 1752,220 1760,160 1770,170 1778,260 1785,240 1792,130 1800,180 1808,250 1816,200 1822,330 1828,400 1836,290 1846,190 1854,220 1862,330 1870,290 1880,360 1888,310 1898,380 1906,435 1914,330 1924,380 1932,270 1942,310 1950,240 1960,200 1968,290 1976,250 1984,330 1994,290 2004,380 2012,300 2022,340 2032,260 2042,210 2050,230 2060,300 2068,270`, 0, 500, 2.45);
        byId("cci").setAttribute("points", toPoints(cci));

        // MACD
        const macd = [
            ...place(`22,373 30,340 38,315 48,300 54,310 60,312 68,335 76,355 84,360 92,373 100,390 108,420 120,462 130,484 140,473 150,440 156,410 162,395 168,375 180,373 190,370 203,362 212,372 222,375 232,386 244,380 256,390 264,405 276,430 290,430 304,436 312,480 320,502 328,498 338,482 346,496 354,495 364,505 374,485 380,450 388,425 400,408 412,428 420,410 434,400 444,380 452,356 470,355 480,360 492,365 510,370 526,355 530,330 540,280 546,280 552,270 556,275 565,262 576,278 586,304 596,270 606,270 614,304 624,250 632,252 638,290 642,320 648,340 656,350 664,370 676,380 688,400 700,410 710,450 716,480 724,482 736,445 746,415 750,380 758,330 766,310 774,345 782,390 790,440 798,448 808,425 816,390 826,365 836,328 846,335 856,348 868,345 880,310 890,270 900,245 913,218 920,230 930,265 940,275 950,290 960,282 972,298 986,296 994,255 1003,228 1010,210 1018,215 1028,260 1040,320 1052,350 1066,365 1080,375 1096,385 1110,408 1120,335 1130,328 1148,322 1156,370 1168,395 1180,420 1198,438 1210,420 1220,400 1230,375 1240,355 1252,350 1264,340 1278,345 1288,368 1294,395 1310,390 1320,380 1330,388 1345,386 1360,378 1380,368 1395,382 1410,390 1420,385 1430,392 1455,390 1462,360 1468,348 1476,378 1486,372 1500,375 1512,360`, 0, 680, 2.178),
            ...place(`0,355 8,345 16,325 26,300 32,240 38,178 46,160 50,130 56,85 62,52 68,46 76,55 84,90 94,105 100,150 106,195 110,220 118,190 126,200 134,225 144,262 150,275 160,312 172,322 182,325 190,340 202,355 212,345 224,342 232,345 240,365 248,395 258,422 270,415 286,430 300,412 314,408 328,408 340,390 352,365 358,345 364,335 372,370 384,380 396,390 408,418 418,424 426,370 432,300 438,275 446,270 454,285 464,290 474,308 484,285 494,270 502,285 516,285 526,310 538,345 550,370 560,380 572,405 586,424 602,420 612,405 624,380 634,350 644,336 654,348 662,380 672,405 682,430 688,415 698,410 708,420 718,440 730,438 742,430 752,425 760,405 768,380 776,340 786,330 800,330 810,316 824,320 834,340 846,368 854,375 862,398 872,350 886,320 892,350 900,385 910,410 920,440 928,452 936,430 950,425 960,425 970,410 982,405 990,380 1000,352 1010,348 1018,342 1030,352 1044,355 1056,370 1070,395 1084,405 1096,430 1106,432 1120,420 1134,435 1148,432 1160,425 1170,400 1180,385 1196,390 1208,395 1218,420 1230,445 1242,430 1252,395 1260,385 1272,410 1282,425 1292,385 1300,380 1310,395 1326,420 1344,432 1354,405 1366,390 1376,370 1386,362 1392,365`, 700, 680, 2.119)
        ];
        byId("macd").setAttribute("points", toPoints(macd));

        // signal line trails the MACD by a few bars
        const signal = [];
        for (let x = 17; x < 1357; x += 2) {
            let sum = 0;
            for (let k = 2; k <= 10; k++) sum += valueAt(macd, x - k);
            signal.push([x, sum / 9]);
        }
        byId("macdSignal").setAttribute("points", toPoints(signal));

        const hist = [
            ...place(`34,0 38,30 46,25 54,5 60,-12 72,-30 80,-22 96,-12 108,-30 120,-43 130,-35 138,-10 148,20 156,40 166,42 174,25 182,5 196,5 206,-3 220,-15 232,-5 250,-3 266,-15 276,-30 290,-12 304,-10 316,-43 328,-20 338,5 350,-5 362,-10 368,-2 374,15 380,35 386,40 394,30 404,15 412,3 420,12 428,20 436,10 446,20 456,18 464,3 480,-2 496,-14 508,2 520,5 528,28 538,50 546,30 556,10 566,14 576,-12 584,-25 592,12 602,15 608,-10 616,-30 624,25 632,20 638,-30 644,-60 654,-40 664,-20 674,-18 684,-28 694,-15 704,-35 714,-48 724,-30 732,5 740,30 748,58 758,55 764,55 768,10 774,-18 782,-40 790,-60 798,-40 804,-8 812,30 820,50 828,40 838,10 848,-10 860,-24 868,5 876,35 886,50 896,45 906,32 916,15 926,-15 934,-30 948,-20 960,-10 974,-14 984,3 992,30 1004,35 1014,20 1022,-12 1030,-35 1040,-50 1054,-45 1064,-18 1080,-8 1096,-8 1108,-32 1114,-10 1120,40 1128,48 1136,30 1146,20 1152,-20 1160,-45 1168,-20 1180,-18 1192,-30 1202,-10 1212,15 1224,28 1236,20 1250,10 1264,18 1272,10 1280,-12 1290,-32 1302,-10 1316,8 1330,-2 1346,5 1366,12 1380,5 1390,-10 1402,-25 1412,-5 1426,-12 1440,-5 1452,5 1464,28 1472,5 1480,-14 1490,-5 1504,-4 1516,8`, 0, 0, 2.178),
            ...place(`0,12 10,25 20,25 28,25 36,90 44,60 52,45 60,68 68,60 74,15 80,-25 88,-35 98,-35 108,-78 116,-15 124,-5 132,-28 140,-40 150,-35 164,-32 176,-10 190,-15 204,-5 220,8 236,0 250,-20 258,-45 268,-20 280,-8 290,-5 304,14 320,5 332,0 342,20 350,5 360,35 368,5 376,-30 386,-15 394,-10 406,-30 416,-25 422,10 430,80 438,50 446,5 456,-12 470,-15 480,5 492,22 502,0 512,-18 526,-25 540,-32 556,-20 572,-10 586,-18 600,-5 612,12 622,25 632,40 642,20 652,-8 662,-30 670,-38 680,-25 690,-5 704,-12 716,-18 728,-10 740,5 752,12 764,20 772,45 780,25 792,8 804,5 820,-3 834,-32 846,-18 862,-25 870,15 878,38 888,30 896,-20 906,-48 918,-32 928,-15 940,14 956,5 970,10 982,25 996,20 1010,10 1024,-5 1044,-14 1058,-10 1074,-12 1096,-22 1106,2 1122,-3 1134,-10 1150,3 1164,15 1176,25 1186,0 1200,-5 1210,-18 1228,-22 1242,12 1256,28 1268,5 1280,-26 1290,5 1298,25 1306,5 1314,-12 1326,-25 1340,-12 1352,10 1364,20 1380,20 1390,8`, 700, 0, 2.119)
        ];
        let bars = "";
        for (let i = 0; i < 500; i++) {
            const x = Math.round(16 + i * 2.69);
            if (x > 1356) break;
            bars += `M${x} 804.500V${(804.5 - valueAt(hist, x)).toFixed(1)}`;
        }
        byId("histogram").setAttribute("d", bars);
    </script>
</body>
</html>
